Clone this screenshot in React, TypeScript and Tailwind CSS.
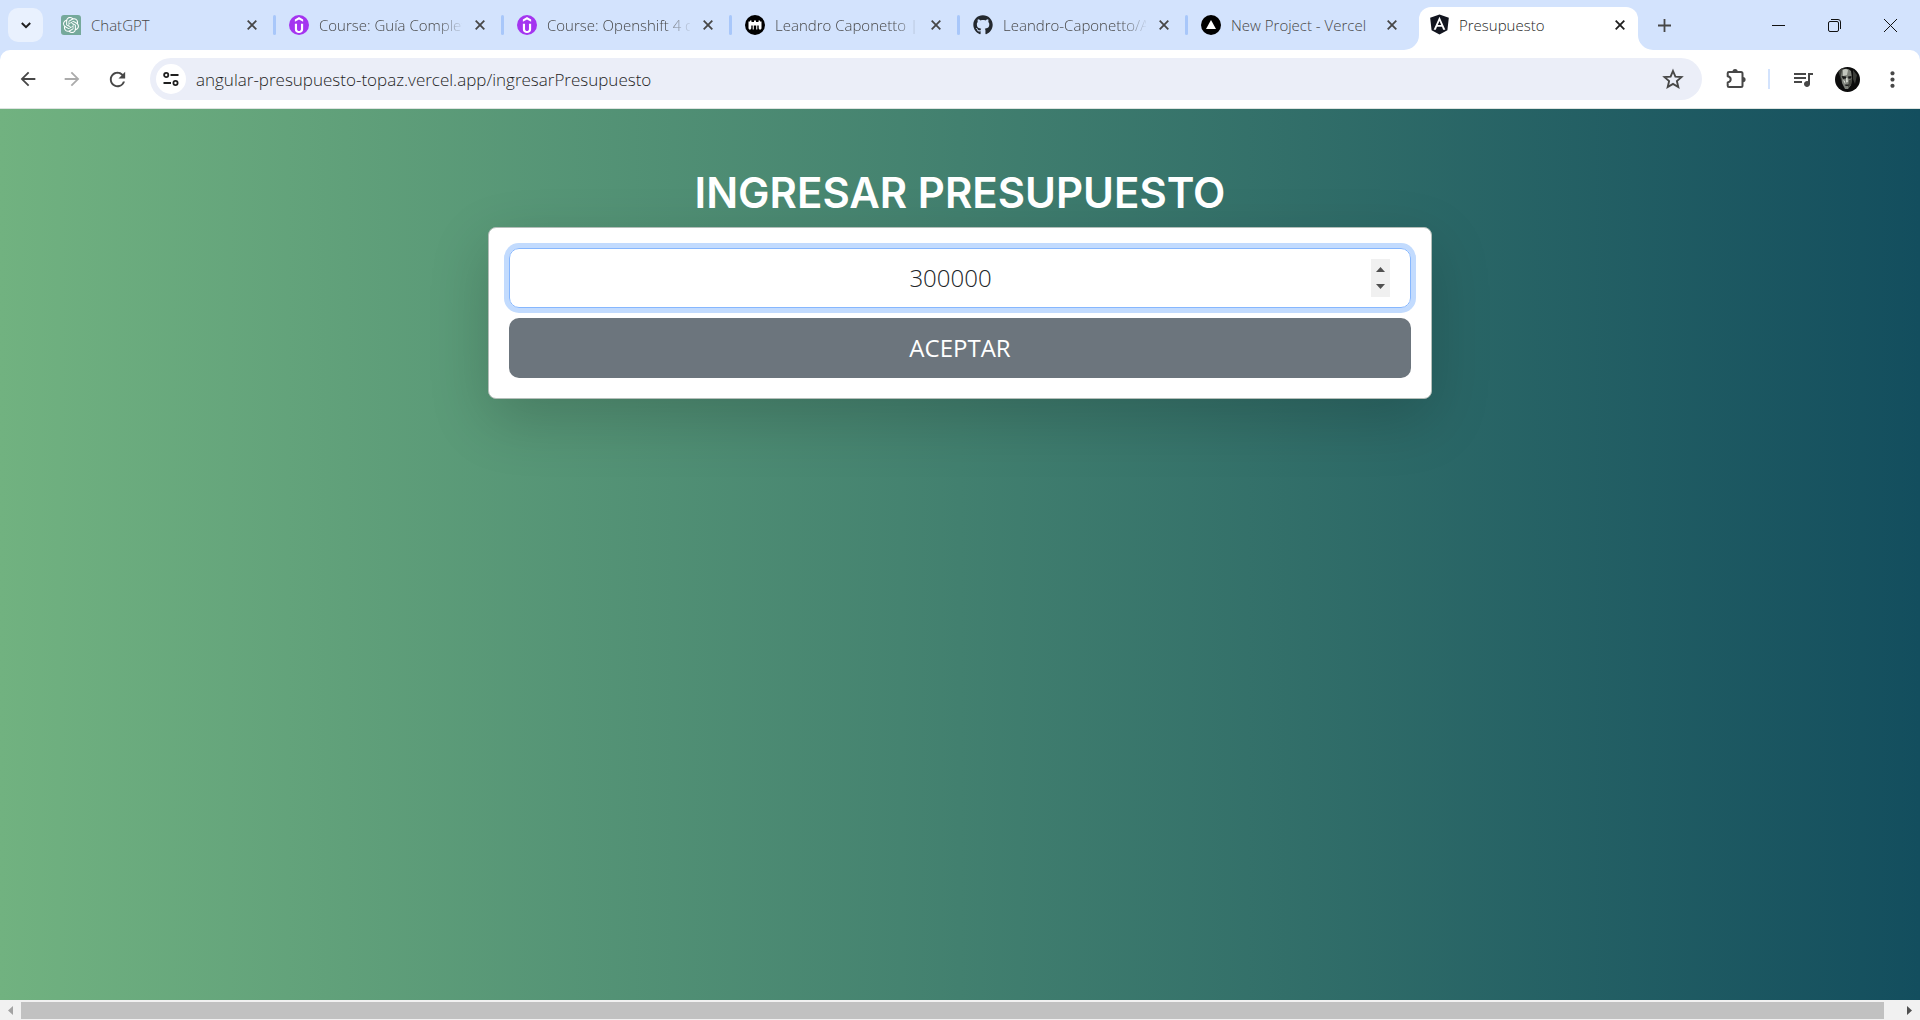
import { useState, type ReactNode } from "react";
import { FaAngular, FaGithub } from "react-icons/fa";
import { SiOpenai, SiUdemy } from "react-icons/si";
import {
  MdArrowBack,
  MdArrowForward,
  MdMoreVert,
  MdQueueMusic,
  MdRefresh,
} from "react-icons/md";

type TabInfo = { title: string; icon: ReactNode; active?: boolean; faded?: boolean; divider?: boolean };

function ChatIcon() {
  return (
    <span className="flex size-5 items-center justify-center rounded-[3px] rounded-br-none bg-[#75a99b] text-white">
      <SiOpenai size={16} />
    </span>
  );
}

function CourseIcon() {
  return (
    <span className="flex size-5 items-center justify-center rounded-full bg-[#a435f0] text-white">
      <SiUdemy size={16} />
    </span>
  );
}

function PortfolioIcon() {
  return (
    <svg viewBox="0 0 20 20" className="size-5">
      <circle cx="10" cy="10" r="10" fill="#000" />
      <path
        d="M3.500 6.500h1.500V5.500h1.500v1.500h2.500V5.500h2v1.500h2.500V5.500H15v1h1.500v7L15 15l-1.300-1.500v-3h-1.400v4h-1.100V10.500H8.800v4H7.700v-4H6.300v3L5 15l-1.500-1.500z"
        fill="#fff"
      />
    </svg>
  );
}

function VercelIcon() {
  return (
    <svg viewBox="0 0 20 20" className="size-5">
      <circle cx="10" cy="10" r="10" fill="#000" />
      <path d="M10 5l5 9H5z" fill="#fff" />
    </svg>
  );
}

function AngularIcon() {
  return <FaAngular size={23} className="shrink-0 text-[#12151f]" />;
}

function StarIcon() {
  return (
    <svg viewBox="0 0 24 24" className="size-6">
      <path
        d="M12 4l2.400 5.600 6.100.5-4.600 4 1.400 5.900L12 16.900 6.700 20l1.400-5.900-4.600-4 6.100-.5z"
        fill="none"
        stroke="currentColor"
        strokeWidth="1.900"
      />
    </svg>
  );
}

function ExtensionIcon() {
  return (
    <svg viewBox="0 0 24 24" className="size-6">
      <path
        d="M5 5h12q1.500 0 1.500 1.500v12q0 1.500-1.500 1.500H5q-1.300 0-1.300-1.300V15.500c4-.800 4-5.500 0-6.300V6.300Q3.700 5 5 5z"
        fill="none"
        stroke="currentColor"
        strokeWidth="2"
        strokeLinejoin="round"
      />
      <path d="M8.500 4.500a2.600 2.600 0 0 1 5.200 0zM19 10a2.600 2.600 0 0 1 0 5.200z" fill="currentColor" />
    </svg>
  );
}

function Avatar() {
  return (
    <svg viewBox="0 0 25 25" className="size-[25px]">
      <defs>
        <clipPath id="face">
          <circle cx="12.5" cy="12.5" r="12.5" />
        </clipPath>
      </defs>
      <g clipPath="url(#face)">
        <rect width="25" height="25" fill="#0c0c0c" />
        <path d="M3 3l5-3 1 3-2 5-1 5zM18 3l4 5-2 9-2-5z" fill="#3a3c38" />
        <path d="M7 3q5-3 9 1l1 7-1 7-3 4h-3l-3-6-1-7z" fill="#7d8079" />
        <path d="M8 3q3-2 5 0l-1 5-4 1z" fill="#c3c6be" />
        <path d="M6.500 9l4.500 .500v2l-3 .500zM13 9.500l3.500-.500v2.500l-3 .300z" fill="#181818" />
        <path d="M11 11h1.500l.500 4-2 .600zM8 13l2 1 .500 4z" fill="#d0d3cb" />
        <path d="M14 13l3-1-1 6-3 3z" fill="#44463f" />
        <path d="M10 17.500h4l-.500 1.500h-3z" fill="#222" />
      </g>
    </svg>
  );
}

const tabs: TabInfo[] = [
  { title: "ChatGPT", icon: <ChatIcon />, divider: true },
  { title: "Course: Guía Complet", icon: <CourseIcon />, faded: true, divider: true },
  { title: "Course: Openshift 4 d", icon: <CourseIcon />, faded: true, divider: true },
  { title: "Leandro Caponetto |", icon: <PortfolioIcon />, faded: true, divider: true },
  {
    title: "Leandro-Caponetto/A",
    icon: <FaGithub size={20} className="text-[#24292f]" />,
    faded: true,
    divider: true,
  },
  { title: "New Project - Vercel", icon: <VercelIcon /> },
  { title: "Presupuesto", icon: <AngularIcon />, active: true },
];

function Cross({ className }: { className: string }) {
  return (
    <svg viewBox="0 0 10 10" className={className}>
      <path d="M.700.700l8.600 8.600M9.300.700L.700 9.300" stroke="currentColor" strokeWidth="1.800" fill="none" />
    </svg>
  );
}

function Tab({ title, icon, active, faded, divider }: TabInfo) {
  return (
    <div className="flex h-full w-57 shrink items-end">
      <div
        className={
          active
            ? "relative flex h-[43px] min-w-0 flex-1 items-center rounded-t-xl bg-white pr-2 pb-2 pl-2.5 text-[#1f1f1f]"
            : "relative flex h-[43px] min-w-0 flex-1 items-center pr-2 pb-2 pl-2.5 text-[#474747]"
        }
      >
        {active && (
          <>
            <svg viewBox="0 0 15 15" className="absolute bottom-0 -left-[15px] size-[15px] fill-white">
              <path d="M15 0v15H0A15 15 0 0 0 15 0z" />
            </svg>
            <svg viewBox="0 0 15 15" className="absolute -right-[15px] bottom-0 size-[15px] fill-white">
              <path d="M0 0v15h15A15 15 0 0 1 0 0z" />
            </svg>
          </>
        )}
        <span className="flex size-5 shrink-0 items-center justify-center">{icon}</span>
        <a
          href="#"
          className={
            faded
              ? "ml-2.5 min-w-0 flex-1 [mask-image:linear-gradient(to_right,black_118px,transparent_146px)] pt-0.5 text-[15px] font-[340] whitespace-nowrap"
              : "ml-2.5 min-w-0 flex-1 pt-0.5 text-[15px] font-[340] whitespace-nowrap"
          }
        >
          {title}
        </a>
        <button aria-label={`Cerrar ${title}`} className="ml-2 flex size-5 items-center justify-center">
          <Cross className="size-2.5" />
        </button>
      </div>
      <div className="flex h-full w-[9px] shrink-0 items-center justify-center">
        {divider && <div className="h-5 w-[3px] rounded-full bg-[#a8c7fa]" />}
      </div>
    </div>
  );
}

function TabStrip() {
  return (
    <header className="flex h-[50px] shrink-0 items-center bg-[#d3e3fd]">
      <button
        aria-label="Buscar pestañas"
        className="ml-2 flex h-[34px] w-[35px] shrink-0 items-center justify-center rounded-[10px] bg-[#e9f1fe]"
      >
        <svg viewBox="0 0 10 7" className="h-[7px] w-2.5">
          <path d="M.800 1L5 5.200 9.200 1" fill="none" stroke="#1f1f1f" strokeWidth="2" />
        </svg>
      </button>
      <nav className="ml-2 flex h-full min-w-0 items-end">
        {tabs.map((tab, i) => (
          <Tab key={i} {...tab} />
        ))}
      </nav>
      <button aria-label="Nueva pestaña" className="ml-[3px] flex size-7 shrink-0 items-center justify-center">
        <svg viewBox="0 0 13 13" className="size-[13px]">
          <path d="M6.500 0v13M0 6.500h13" stroke="#474747" strokeWidth="1.800" />
        </svg>
      </button>
      <div className="mr-0.5 ml-auto flex h-full shrink-0">
        <button aria-label="Minimizar" className="flex w-14 items-center justify-center">
          <svg viewBox="0 0 13 13" className="size-[13px]">
            <path d="M0 6.500h13" stroke="#111" />
          </svg>
        </button>
        <button aria-label="Restaurar" className="flex w-14 items-center justify-center">
          <svg viewBox="0 0 13 13" className="size-[13px]" fill="none" stroke="#111">
            <rect x=".5" y="2.500" width="10" height="10" rx="1.500" />
            <path d="M3 .500h7q2.500 0 2.500 2.500v7" />
          </svg>
        </button>
        <button aria-label="Cerrar ventana" className="flex w-14 items-center justify-center">
          <svg viewBox="0 0 13 13" className="size-[13px]">
            <path d="M0 0l13 13M13 0L0 13" stroke="#111" />
          </svg>
        </button>
      </div>
    </header>
  );
}

function Toolbar() {
  return (
    <div className="shrink-0 bg-[#d3e3fd]">
      <div className="flex h-[59px] items-center rounded-t-[10px] border-b border-[#dde3e0] bg-white text-[#474747]">
        <button aria-label="Atrás" className="ml-4 flex w-6 justify-center">
          <MdArrowBack size={22} />
        </button>
        <button aria-label="Adelante" className="ml-5 flex w-6 justify-center text-[#ababab]">
          <MdArrowForward size={22} />
        </button>
        <button aria-label="Recargar" className="ml-[21px] flex w-6 justify-center">
          <MdRefresh size={23} />
        </button>
        <div className="ml-[21px] flex h-[42px] min-w-0 flex-1 items-center rounded-full bg-[#ebeef8] pr-[17px] pl-1.5">
          <button
            aria-label="Información del sitio"
            className="flex size-[30px] shrink-0 items-center justify-center rounded-full bg-white"
          >
            <svg viewBox="0 0 16 14" className="h-3.5 w-4" fill="none" stroke="#1f1f1f" strokeWidth="1.800">
              <circle cx="3.200" cy="3" r="2.100" />
              <path d="M7.500 3H15.500M.500 11H8" />
              <circle cx="12.500" cy="11" r="2.100" />
            </svg>
          </button>
          <input
            aria-label="Dirección"
            defaultValue="angular-presupuesto-topaz.vercel.app/ingresarPresupuesto"
            className="ml-2.5 min-w-0 flex-1 bg-transparent pt-0.5 text-[17px] font-[340] text-[#1f1f1f] outline-none"
          />
          <button aria-label="Favorito">
            <StarIcon />
          </button>
        </div>
        <button aria-label="Extensiones" className="ml-[22px]">
          <ExtensionIcon />
        </button>
        <div className="ml-5 h-5 w-0.5 bg-[#d3e3fd]" />
        <button aria-label="Control multimedia" className="ml-[21px]">
          <MdQueueMusic size={24} />
        </button>
        <button aria-label="Perfil" className="ml-5">
          <Avatar />
        </button>
        <button aria-label="Menú" className="mr-[15px] ml-5">
          <MdMoreVert size={25} />
        </button>
      </div>
    </div>
  );
}

function BudgetForm() {
  const [amount, setAmount] = useState(300000);
  return (
    <main className="min-h-0 flex-1 bg-linear-to-r/srgb from-[#71b280] to-[#134e5e] pt-[60px]">
      <div className="mx-auto w-1/2 px-2">
        <h1 className="mb-2.5 text-center font-['Inter'] text-[42px] leading-12 font-semibold whitespace-nowrap text-white">
          INGRESAR PRESUPUESTO
        </h1>
        <form
          onSubmit={(e) => e.preventDefault()}
          className="flex flex-col gap-2.5 rounded-lg border border-[#b4beb9] bg-white p-5 shadow-[0_20px_60px_rgba(0,0,0,0.175)]"
        >
          <div className="flex h-[60px] items-center rounded-[10px] border border-[#86b7fe] px-5 shadow-[0_0_0_5px_#c2dbfe]">
            <input
              type="number"
              aria-label="Presupuesto"
              value={amount}
              onChange={(e) => setAmount(Number(e.target.value))}
              className="min-w-0 flex-1 [appearance:textfield] text-center text-2xl font-[360] text-[#212529] outline-none [&::-webkit-inner-spin-button]:appearance-none"
            />
            <div className="flex h-[38px] w-[19px] flex-col bg-[#f0f0f0]">
              <button
                type="button"
                aria-label="Aumentar"
                onClick={() => setAmount(amount + 1)}
                className="flex flex-1 items-center justify-center pt-0.5"
              >
                <svg viewBox="0 0 9 5" className="h-[5px] w-[9px]">
                  <path d="M0 5L4.500 0 9 5z" fill="#505050" />
                </svg>
              </button>
              <button
                type="button"
                aria-label="Disminuir"
                onClick={() => setAmount(amount - 1)}
                className="flex flex-1 items-center justify-center pb-0.5"
              >
                <svg viewBox="0 0 9 5" className="h-[5px] w-[9px]">
                  <path d="M0 0L4.500 5 9 0z" fill="#505050" />
                </svg>
              </button>
            </div>
          </div>
          <button type="submit" className="h-[60px] rounded-[10px] bg-[#6c757d] text-2xl text-white">
            ACEPTAR
          </button>
        </form>
      </div>
    </main>
  );
}

function HorizontalScrollbar() {
  return (
    <div className="flex h-5 shrink-0 items-center bg-[#f1f1f1]">
      <button aria-label="Desplazar a la izquierda" className="flex w-[21px] justify-center">
        <svg viewBox="0 0 5 9" className="h-[9px] w-[5px]">
          <path d="M5 0L0 4.500 5 9z" fill="#a3a3a3" />
        </svg>
      </button>
      <div className="h-[17px] flex-1 bg-[#c1c1c1]" />
      <div className="w-[15px]" />
      <button aria-label="Desplazar a la derecha" className="flex w-[21px] justify-center">
        <svg viewBox="0 0 5 9" className="h-[9px] w-[5px]">
          <path d="M0 0l5 4.500L0 9z" fill="#505050" />
        </svg>
      </button>
    </div>
  );
}

export default function App() {
  return (
    <div className="flex h-screen flex-col overflow-hidden font-['Open_Sans','Noto_Sans',sans-serif]">
      <TabStrip />
      <Toolbar />
      <BudgetForm />
      <HorizontalScrollbar />
    </div>
  );
}
